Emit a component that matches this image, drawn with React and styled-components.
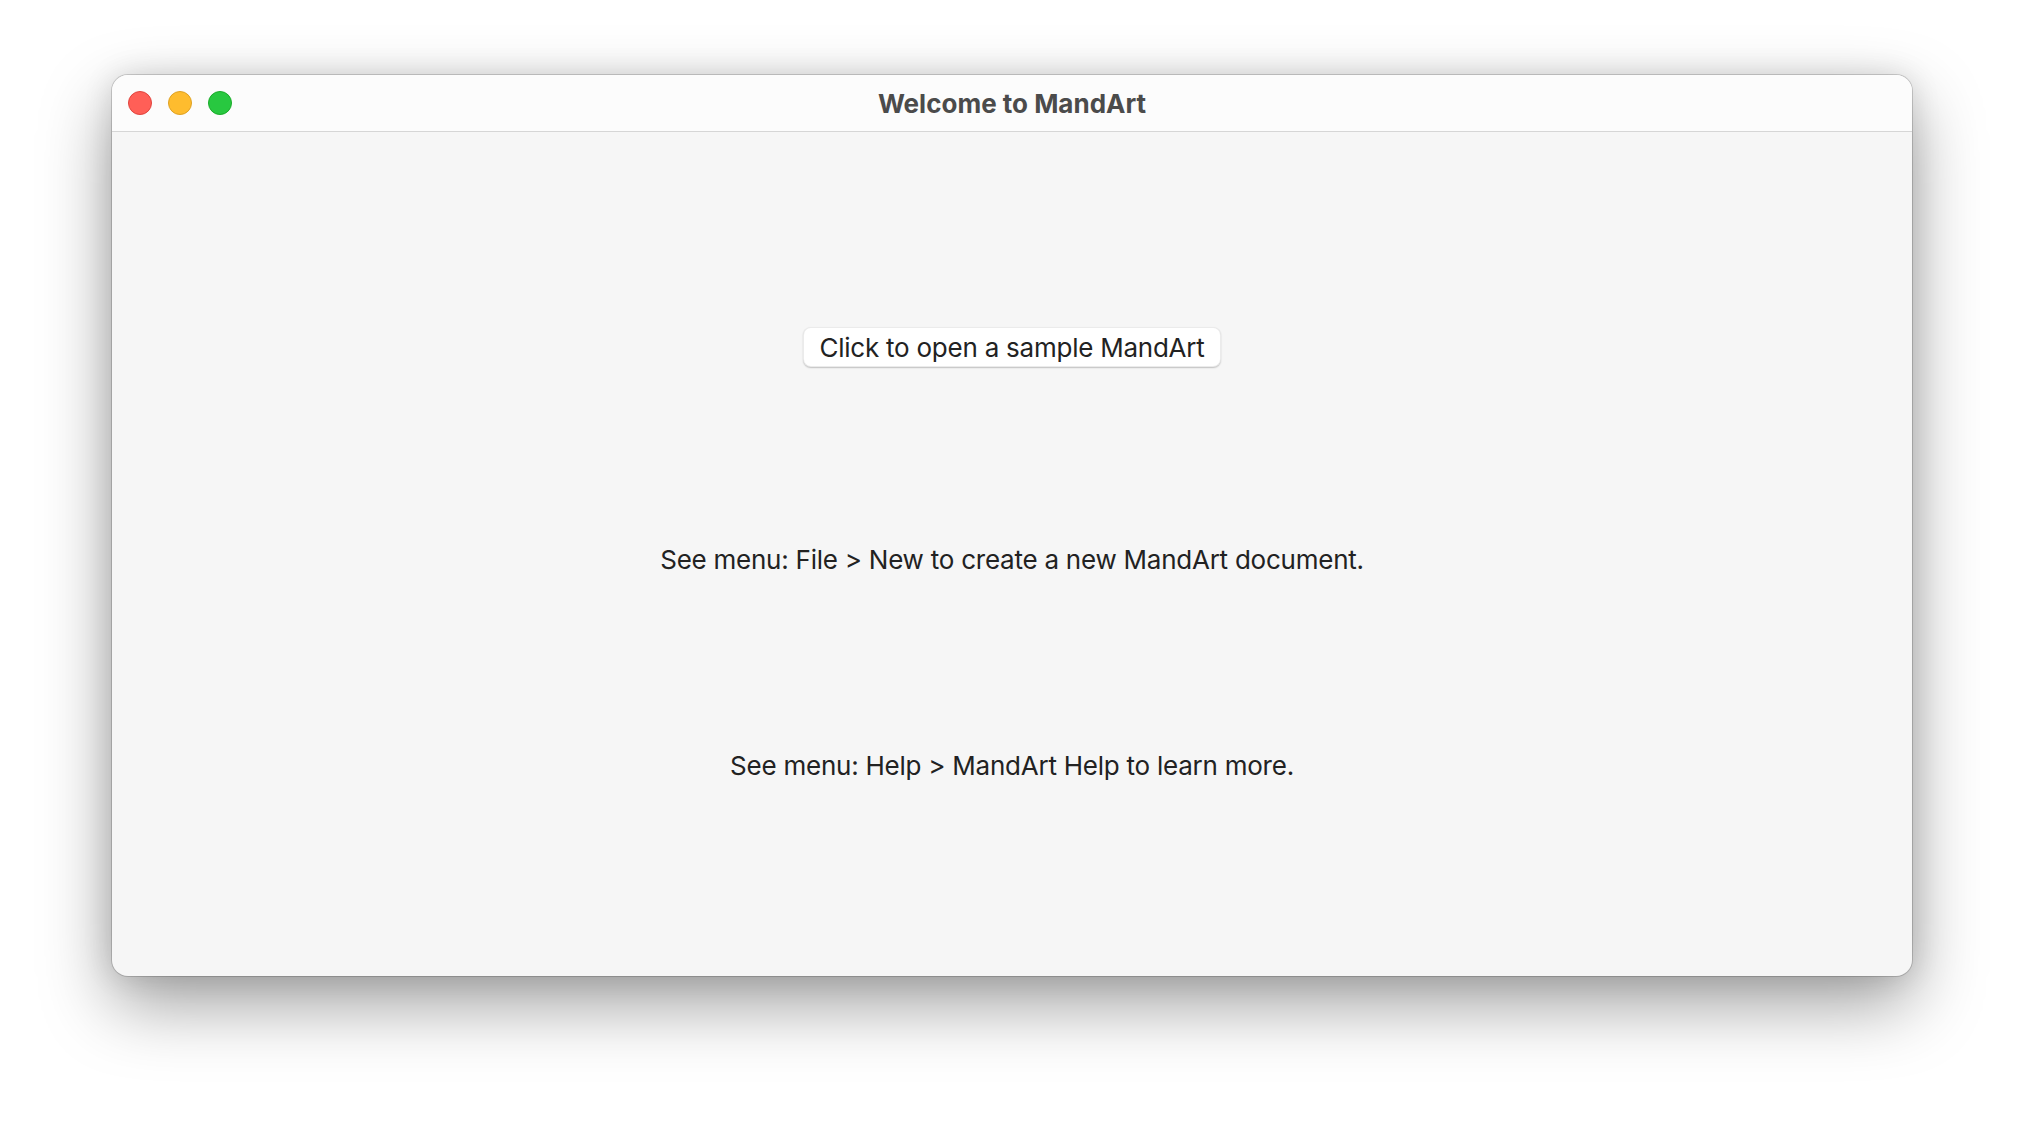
import React from "react";
import styled, { createGlobalStyle } from "styled-components";

const Global = createGlobalStyle`
  html, body { margin: 0; padding: 0; background: #ffffff; }
  body { font-family: Inter, "Noto Sans", sans-serif; }
`;

const Page = styled.div`
  width: 2024px;
  height: 1124px;
  box-sizing: border-box;
  padding: 75px 112px 148px;
  background: #ffffff;
`;

const Window = styled.div`
  width: 1800px;
  height: 901px;
  border-radius: 16px;
  overflow: hidden;
  display: flex;
  flex-direction: column;
  background: #f6f6f6;
  box-shadow: 0 0 0 1px rgba(0, 0, 0, 0.16), 0 28px 70px rgba(0, 0, 0, 0.38),
    0 0 30px rgba(0, 0, 0, 0.12);
`;

const TitleBar = styled.div`
  height: 57px;
  box-sizing: border-box;
  flex: none;
  position: relative;
  display: flex;
  align-items: center;
  justify-content: center;
  background: #fcfcfc;
  border-bottom: 1px solid #d6d6d6;
`;

const Lights = styled.div`
  position: absolute;
  left: 16px;
  top: 16px;
  display: flex;
  gap: 16px;
`;

const Light = styled.span`
  width: 22px;
  height: 22px;
  border-radius: 50%;
  background: ${(p) => p.$fill};
  border: 1px solid ${(p) => p.$edge};
`;

const Title = styled.div`
  font-family: Inter, "Noto Sans", sans-serif;
  font-weight: 700;
  font-size: 26px;
  letter-spacing: 0px;
  color: #4b4b4b;
`;

const Content = styled.div`
  flex: 1;
  display: flex;
  flex-direction: column;
  align-items: center;
  padding-top: 195px;
`;

const OpenButton = styled.button`
  height: 40px;
  width: 418px;
  box-sizing: border-box;
  padding: 0;
  background: #ffffff;
  border: 1px solid rgba(0, 0, 0, 0.08);
  border-radius: 8px;
  box-shadow: 0 1px 1.5px rgba(0, 0, 0, 0.22);
  font-family: Inter, "Noto Sans", sans-serif;
  font-size: 26px;
  letter-spacing: -0.24px;
  color: #222222;
  cursor: pointer;
`;

const Note = styled.p`
  margin: ${(p) => p.$top}px 0 0;
  font-family: Inter, "Noto Sans", sans-serif;
  font-size: 26px;
  line-height: 32px;
  letter-spacing: -0.24px;
  color: #222222;
`;

export default function App() {
  return (
    <>
      <Global />
      <Page>
        <Window>
          <TitleBar>
            <Lights>
              <Light $fill="#ff5f57" $edge="#e0443e" />
              <Light $fill="#febc2e" $edge="#dea123" />
              <Light $fill="#28c840" $edge="#1aab29" />
            </Lights>
            <Title>Welcome to MandArt</Title>
          </TitleBar>
          <Content>
            <OpenButton>Click to open a sample MandArt</OpenButton>
            <Note $top={177}>See menu: File &gt; New to create a new MandArt document.</Note>
            <Note $top={174}>See menu: Help &gt; MandArt Help to learn more.</Note>
          </Content>
        </Window>
      </Page>
    </>
  );
}
